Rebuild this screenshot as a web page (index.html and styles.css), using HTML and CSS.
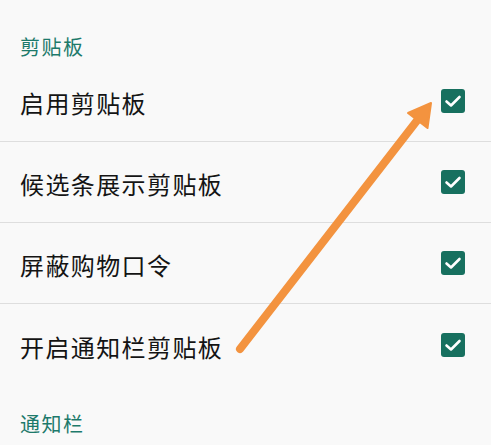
FILE: index.html
```html
<!DOCTYPE html>
<html lang="zh-CN">
<head>
<meta charset="utf-8">
<link rel="stylesheet" href="styles.css">
</head>
<body>
<div class="page">
  <div class="section-title first">剪贴板</div>
  <div class="list">
    <div class="row">
      <span class="label">启用剪贴板</span>
      <span class="check"><svg viewBox="0 0 24 24" width="24" height="24"><polyline points="5.5,12.5 10,16.5 18.5,8" fill="none" stroke="#fff" stroke-width="2.6" stroke-linecap="round" stroke-linejoin="round"/></svg></span>
    </div>
    <div class="row">
      <span class="label">候选条展示剪贴板</span>
      <span class="check"><svg viewBox="0 0 24 24" width="24" height="24"><polyline points="5.5,12.5 10,16.5 18.5,8" fill="none" stroke="#fff" stroke-width="2.6" stroke-linecap="round" stroke-linejoin="round"/></svg></span>
    </div>
    <div class="row">
      <span class="label">屏蔽购物口令</span>
      <span class="check"><svg viewBox="0 0 24 24" width="24" height="24"><polyline points="5.5,12.5 10,16.5 18.5,8" fill="none" stroke="#fff" stroke-width="2.6" stroke-linecap="round" stroke-linejoin="round"/></svg></span>
    </div>
    <div class="row">
      <span class="label">开启通知栏剪贴板</span>
      <span class="check"><svg viewBox="0 0 24 24" width="24" height="24"><polyline points="5.5,12.5 10,16.5 18.5,8" fill="none" stroke="#fff" stroke-width="2.6" stroke-linecap="round" stroke-linejoin="round"/></svg></span>
    </div>
  </div>
  <div class="section-title second">通知栏</div>
  <svg class="arrow" width="491" height="445" viewBox="0 0 491 445">
    <line x1="240" y1="349" x2="419" y2="118" stroke="#f3933f" stroke-width="8" stroke-linecap="round"/>
    <polygon points="431,103 427.5,128 408,113" fill="#f3933f" stroke="#f3933f" stroke-width="2" stroke-linejoin="round"/>
  </svg>
</div>
</body>
</html>
```

FILE: styles.css
```css
html, body {
  margin: 0;
  padding: 0;
}
body {
  background: #f9f9f9;
  font-family: "Noto Sans CJK SC", "Noto Sans", sans-serif;
  overflow: hidden;
}
.page {
  position: relative;
  width: 491px;
  height: 445px;
}
.section-title {
  color: #1d7a6b;
  font-size: 20px;
  line-height: 24px;
  letter-spacing: 1.5px;
  padding: 0 20px;
}
.section-title.first {
  padding-top: 35px;
  padding-bottom: 2px;
}
.section-title.second {
  padding-top: 27px;
}
.list {
  display: flex;
  flex-direction: column;
}
.row {
  height: 81px;
  display: flex;
  align-items: center;
  justify-content: space-between;
  padding: 0 26px 0 20px;
  box-sizing: border-box;
  border-bottom: 1.5px solid #dedede;
}
.row:last-child {
  border-bottom: none;
}
.label {
  font-size: 24px;
  letter-spacing: 1.4px;
  color: #141414;
  padding-top: 3px;
}
.check {
  width: 24px;
  height: 24px;
  background: #17705f;
  border-radius: 3px;
  display: flex;
}
.arrow {
  position: absolute;
  left: 0;
  top: 0;
  pointer-events: none;
}
```
